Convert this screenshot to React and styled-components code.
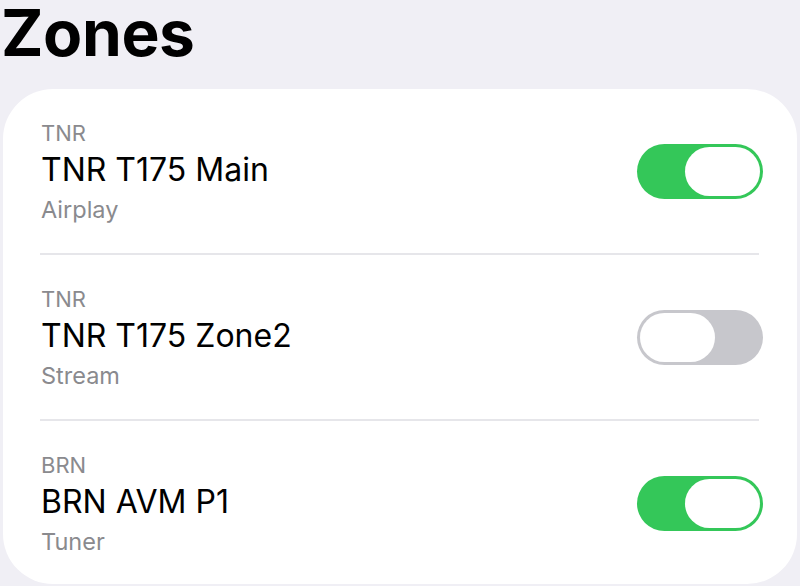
import React, { useState } from "react";
import styled, { createGlobalStyle } from "styled-components";

const GlobalStyle = createGlobalStyle`
  html, body {
    margin: 0;
    padding: 0;
    background: #f0eff5;
    font-family: Inter, "Noto Sans", "Liberation Sans", sans-serif;
    -webkit-font-smoothing: antialiased;
  }
`;

const zonesData = [
  { id: 1, brand: "TNR", name: "TNR T175 Main", source: "Airplay", on: true },
  { id: 2, brand: "TNR", name: "TNR T175 Zone2", source: "Stream", on: false },
  { id: 3, brand: "BRN", name: "BRN AVM P1", source: "Tuner", on: true },
];

const Page = styled.div`
  width: 800px;
  height: 586px;
  overflow: hidden;
`;

const Title = styled.h1`
  margin: 0 0 23px;
  padding-left: 1px;
  font-size: 64px;
  line-height: 66px;
  font-weight: 700;
  letter-spacing: -0.4px;
  color: #000;
`;

const Card = styled.div`
  margin: 0 3px;
  background: #fff;
  border-radius: 50px;
  padding: 0 35px 0 37px;
  height: 495px;
`;

const Row = styled.div`
  display: flex;
  align-items: center;
  justify-content: space-between;
  height: 164px;
  border-bottom: ${(p) => (p.$last ? "none" : "2px solid #e6e6ea")};
  margin-right: 3px;
`;

const TextCol = styled.div`
  display: flex;
  flex-direction: column;
  padding-bottom: 1px;
  padding-left: 1px;
`;

const Brand = styled.div`
  font-size: 22px;
  line-height: 28px;
  margin-bottom: 5px;
  color: #8a8a8e;
`;

const Name = styled.div`
  font-size: 32px;
  line-height: 36px;
  color: #000;
`;

const Source = styled.div`
  margin-top: 10px;
  font-size: 23.5px;
  line-height: 24px;
  color: #8a8a8e;
`;

const Track = styled.button`
  display: flex;
  justify-content: ${(p) => (p.$on ? "flex-end" : "flex-start")};
  align-items: center;
  box-sizing: border-box;
  width: 126px;
  height: 55px;
  padding: 3px;
  margin-right: -4px;
  border: none;
  border-radius: 28px;
  background: ${(p) => (p.$on ? "#34c759" : "#c7c7cc")};
  cursor: pointer;
`;

const Knob = styled.span`
  display: block;
  width: 75px;
  height: 49px;
  border-radius: 25px;
  background: #fff;
`;

const ZoneRow = ({ zone, last, onToggle }) => (
  <Row $last={last}>
    <TextCol>
      <Brand>{zone.brand}</Brand>
      <Name>{zone.name}</Name>
      <Source>{zone.source}</Source>
    </TextCol>
    <Track $on={zone.on} onClick={() => onToggle(zone.id)}>
      <Knob />
    </Track>
  </Row>
);

export default function App() {
  const [zones, setZones] = useState(zonesData);

  const toggleZone = (id) => {
    setZones(zones.map((z) => (z.id === id ? { ...z, on: !z.on } : z)));
  };

  return (
    <Page>
      <GlobalStyle />
      <Title>Zones</Title>
      <Card>
        {zones.map((zone, i) => (
          <ZoneRow
            key={zone.id}
            zone={zone}
            last={i === zones.length - 1}
            onToggle={toggleZone}
          />
        ))}
      </Card>
    </Page>
  );
}
